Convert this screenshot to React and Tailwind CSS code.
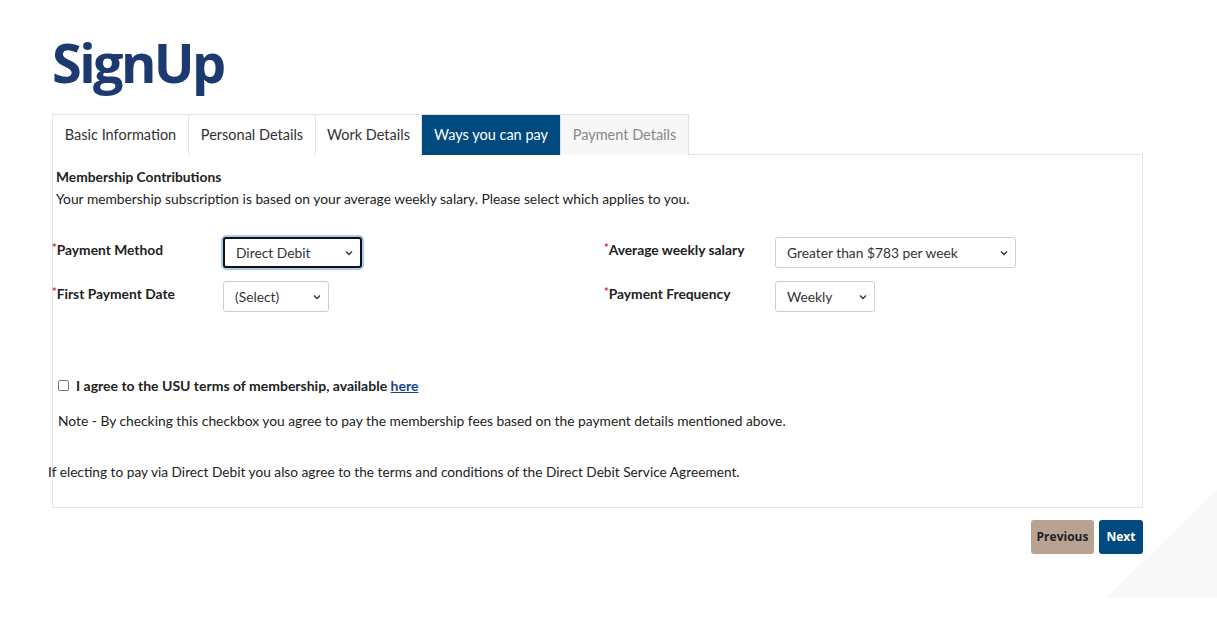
import React from 'react';

const tabs = [
  { label: 'Basic Information', w: 'w-[137px]' },
  { label: 'Personal Details', w: 'w-[127px]' },
  { label: 'Work Details', w: 'w-[106px]' },
  { label: 'Ways you can pay', w: 'w-[139px]', active: true },
  { label: 'Payment Details', w: 'w-[128px]', disabled: true },
];

const Field = ({ label, children }) => (
  <div className="flex items-start">
    <div className="w-[171px] pt-[3px] text-[13.8px] font-bold text-[#222]">
      <span className="text-[#e0212b] text-[11px] align-top">*</span>
      {label}
    </div>
    {children}
  </div>
);

const Select = ({ value, w, focused }) => (
  <div
    className={`${w} h-[31px] flex items-center justify-between pl-[11px] pr-[6px] bg-white rounded-[3px] text-[13.8px] text-[#333] ${
      focused
        ? 'border-2 border-[#111] shadow-[0_0_0_2px_#a9cdf0]'
        : 'border border-[#cfcfcf]'
    }`}
  >
    <span>{value}</span>
    <svg width="10" height="10" viewBox="0 0 10 10" className="text-[#333]">
      <path d="M2 3.5 L5 6.5 L8 3.5" fill="none" stroke="currentColor" strokeWidth="1.4" />
    </svg>
  </div>
);

export default function App() {
  return (
    <div className="relative min-h-[617px] bg-white font-['Lato',sans-serif] text-[#222] overflow-hidden">
      <svg className="absolute right-0 top-[490px]" width="110" height="107" viewBox="0 0 110 107">
        <polygon points="110,0 110,107 0,107" fill="#f8f8f8" />
      </svg>

      <div className="relative pl-[52px] pt-[35px] w-[1143px]">
        <h1 className="text-[54px] font-bold leading-none text-[#1c3a70] tracking-[-2.6px] font-['Open_Sans',sans-serif]">
          SignUp
        </h1>

        <div className="flex mt-[25px] h-[41px]">
          {tabs.map((t) => (
            <div
              key={t.label}
              className={`${t.w} flex items-center justify-center text-[14.5px] border-t border-r border-[#e3e3e3] first:border-l ${
                t.active
                  ? 'bg-[#004a80] text-white border-[#004a80]'
                  : t.disabled
                  ? 'bg-[#f7f7f7] text-[#888]'
                  : 'bg-white text-[#333]'
              }`}
            >
              {t.label}
            </div>
          ))}
        </div>

        <div className="border border-[#e3e3e3] h-[354px] -mt-px">
          <div className="pl-[3px] pt-[12px]">
            <div className="text-[13.8px] font-bold">Membership Contributions</div>
            <p className="text-[13.8px] mt-[1px]">
              Your membership subscription is based on your average weekly salary. Please select which applies to you.
            </p>
          </div>

          <div className="flex mt-[28px] -ml-px">
            <div className="w-[552px] flex flex-col gap-[13px]">
              <Field label="Payment Method">
                <Select value="Direct Debit" w="w-[139px]" focused />
              </Field>
              <Field label="First Payment Date">
                <Select value="(Select)" w="w-[106px]" />
              </Field>
            </div>
            <div className="flex flex-col gap-[13px]">
              <Field label="Average weekly salary">
                <Select value="Greater than $783 per week" w="w-[241px]" />
              </Field>
              <Field label="Payment Frequency">
                <Select value="Weekly" w="w-[100px]" />
              </Field>
            </div>
          </div>

          <div className="flex items-center gap-[7px] mt-[63px] pl-[5px]">
            <div className="w-[11px] h-[11px] border border-[#777] rounded-[2px] bg-white" />
            <span className="text-[14px] font-bold">
              I agree to the USU terms of membership, available{' '}
              <span className="text-[#1a3f8f] underline">here</span>
            </span>
          </div>
          <p className="text-[13.8px] pl-[5px] mt-[15px]">
            Note - By checking this checkbox you agree to pay the membership fees based on the payment details mentioned above.
          </p>
          <p className="text-[13.7px] -ml-[5px] mt-[30px]">
            If electing to pay via Direct Debit you also agree to the terms and conditions of the Direct Debit Service Agreement.
          </p>
        </div>

        <div className="flex justify-end gap-[5px] mt-[12px]">
          <button className="h-[34px] w-[63px] rounded-[3px] bg-[#b8a292] text-[#222] text-[12px] font-bold font-['Open_Sans',sans-serif]">
            Previous
          </button>
          <button className="h-[34px] w-[44px] rounded-[3px] bg-[#004a80] text-white text-[12px] font-bold font-['Open_Sans',sans-serif]">
            Next
          </button>
        </div>
      </div>
    </div>
  );
}
